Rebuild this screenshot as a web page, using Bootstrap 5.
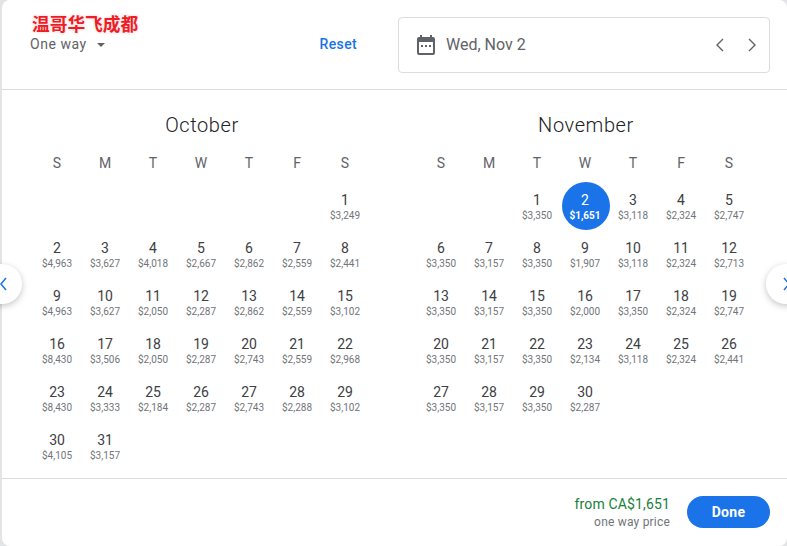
<!DOCTYPE html>
<html lang="en">
<head>
  <meta charset="UTF-8">
  <meta name="viewport" content="width=device-width, initial-scale=1.0">
  <title>Departure date</title>
  <link href="https://cdn.jsdelivr.net/npm/bootstrap@5.3.0/dist/css/bootstrap.min.css" rel="stylesheet">
  <style>
    body {
      background: #e3e4e6;
      font-family: Roboto, "Liberation Sans", sans-serif;
      color: #3c4043;
      overflow: hidden;
    }
    .sheet {
      position: relative;
      width: 785px;
      height: 546px;
      margin-left: 2px;
      background: #fff;
      border-radius: 8px;
    }
    .sheet-top {
      height: 90px;
      border-bottom: 1px solid #dadce0;
      padding: 17px 17px 0 28px;
    }
    .route-title {
      position: absolute;
      left: 30px;
      top: 11px;
      font: 700 17.7px/24px "Noto Sans CJK SC", sans-serif;
      color: #ee1c25;
      text-shadow: 0 0 2px #fff, 0 0 3px #f3b7ba;
    }
    .trip-type {
      margin-top: 17px;
      font-size: 14px;
      line-height: 20px;
      color: #5f6368;
      letter-spacing: .55px;
    }
    .trip-type i {
      display: inline-block;
      margin-left: 10px;
      vertical-align: 2px;
      border: 4px solid transparent;
      border-top-color: #5f6368;
      border-bottom-width: 0;
    }
    .reset-link {
      margin: 17px 41px 0 0;
      font-size: 14px;
      line-height: 20px;
      font-weight: 500;
      letter-spacing: .35px;
      color: #1a73e8;
      text-decoration: none;
    }
    .date-box {
      width: 372px;
      height: 56px;
      border: 1px solid #dadce0;
      border-radius: 4px;
      padding: 0 8px 0 18px;
      color: #5f6368;
    }
    .date-text {
      margin-left: 11px;
      font-size: 16px;
      color: #5f6368;
    }
    .months {
      height: 388px;
      padding: 0 31px 0 32px;
      gap: 48px;
    }
    .month-box { width: 336px; }
    .month-name {
      margin: 0;
      padding-top: 23px;
      height: 54px;
      font-size: 20px;
      line-height: 24px;
      font-weight: 300;
      text-align: center;
      color: #202124;
      letter-spacing: .6px;
    }
    .day-grid {
      display: grid;
      grid-template-columns: repeat(7, 48px);
      grid-template-rows: 38px;
      grid-auto-rows: 48px;
    }
    .day-head {
      padding-right: 2px;
      font-size: 14px;
      line-height: 38px;
      text-align: center;
      color: #5f6368;
    }
    .day-cell {
      text-align: center;
      padding: 10px 2px 0 0;
      font-size: 14px;
      line-height: 17px;
      color: #3c4043;
    }
    .day-cell span {
      display: block;
      font-size: 10px;
      line-height: 12px;
      margin-top: 1px;
      color: #70757a;
    }
    .day-cell.picked {
      background: #1a73e8;
      border-radius: 50%;
      color: #fff;
    }
    .day-cell.picked span {
      color: #fff;
      font-weight: 700;
    }
    .sheet-foot {
      height: 68px;
      border-top: 1px solid #dadce0;
      padding: 0 17px 0 0;
    }
    .from-price {
      font-size: 14px;
      line-height: 18px;
      color: #188038;
      letter-spacing: .15px;
    }
    .price-note {
      font-size: 12px;
      line-height: 18px;
      color: #70757a;
      letter-spacing: .2px;
    }
    .done-btn {
      width: 83px;
      height: 32px;
      margin: -1px 0 0 17px;
      padding: 0;
      border: 0;
      border-radius: 16px;
      background: #1a73e8;
      color: #fff;
      font-size: 14px;
      font-weight: 700;
      letter-spacing: .3px;
    }
    .page-arrow {
      position: absolute;
      top: 264px;
      width: 40px;
      height: 40px;
      padding: 0;
      border: 0;
      border-radius: 50%;
      background: #fff;
      box-shadow: 0 2px 6px rgba(60, 64, 67, .3);
    }
    .arrow-prev { left: -20px; }
    .arrow-next { left: 764px; }
    .arrow-prev svg { margin-left: 18px; }
    .arrow-next svg { margin-left: 17px; }
  </style>
</head>
<body>
  <div class="sheet">
    <div class="sheet-top d-flex justify-content-between">
      <div class="route-title">温哥华飞成都</div>
      <div class="trip-type">One way<i></i></div>
      <div class="d-flex">
        <a class="reset-link" href="#">Reset</a>
        <div class="date-box d-flex align-items-center">
          <svg width="18" height="20" viewBox="0 0 18 20" fill="#5f6368">
            <path d="M3 0h2v2h8V0h2v2h1a2 2 0 0 1 2 2v14a2 2 0 0 1-2 2H2a2 2 0 0 1-2-2V4a2 2 0 0 1 2-2h1zM2 7v11h14V7z"/>
            <rect x="4" y="10" width="2" height="2"/><rect x="8" y="10" width="2" height="2"/><rect x="12" y="10" width="2" height="2"/>
          </svg>
          <span class="date-text flex-grow-1">Wed, Nov 2</span>
          <svg class="me-4" width="9" height="14" viewBox="0 0 9 14" fill="none" stroke="#5f6368" stroke-width="1.4"><path d="M8 1 2 7l6 6"/></svg>
          <svg class="me-1" width="9" height="14" viewBox="0 0 9 14" fill="none" stroke="#5f6368" stroke-width="1.4"><path d="m1 1 6 6-6 6"/></svg>
        </div>
      </div>
    </div>

    <div class="months d-flex">
      <div class="month-box" id="october"></div>
      <div class="month-box" id="november"></div>
    </div>

    <div class="sheet-foot d-flex align-items-center justify-content-end">
      <div class="text-end">
        <div class="from-price">from CA$1,651</div>
        <div class="price-note">one way price</div>
      </div>
      <button type="button" class="done-btn">Done</button>
    </div>

    <button type="button" class="page-arrow arrow-prev d-flex align-items-center">
      <svg width="7" height="14" viewBox="0 0 7 14" fill="none" stroke="#1a73e8" stroke-width="1.5"><path d="M6 1 1 7l5 6"/></svg>
    </button>
    <button type="button" class="page-arrow arrow-next d-flex align-items-center">
      <svg width="7" height="14" viewBox="0 0 7 14" fill="none" stroke="#1a73e8" stroke-width="1.5"><path d="m1 1 5 6-5 6"/></svg>
    </button>
  </div>

  <script>
    const october = ['3,249','4,963','3,627','4,018','2,667','2,862','2,559','2,441','4,963','3,627','2,050','2,287','2,862','2,559','3,102','8,430','3,506','2,050','2,287','2,743','2,559','2,968','8,430','3,333','2,184','2,287','2,743','2,288','3,102','4,105','3,157'];
    const november = ['3,350','1,651','3,118','2,324','2,747','3,350','3,157','3,350','1,907','3,118','2,324','2,713','3,350','3,157','3,350','2,000','3,350','2,324','2,747','3,350','3,157','3,350','2,134','3,118','2,324','2,441','3,350','3,157','3,350','2,287'];

    function renderMonth(id, name, offset, prices, picked) {
      let html = `<h2 class="month-name">${name}</h2><div class="day-grid">`;
      'SMTWTFS'.split('').forEach(d => { html += `<div class="day-head">${d}</div>`; });
      for (let i = 0; i < offset; i++) html += '<div></div>';
      prices.forEach((p, i) => {
        const cls = i + 1 === picked ? ' picked' : '';
        html += `<div class="day-cell${cls}">${i + 1}<span>$${p}</span></div>`;
      });
      document.getElementById(id).innerHTML = html + '</div>';
    }

    renderMonth('october', 'October', 6, october, 0);
    renderMonth('november', 'November', 2, november, 2);
  </script>
  <script src="https://cdn.jsdelivr.net/npm/bootstrap@5.3.0/dist/js/bootstrap.bundle.min.js"></script>
</body>
</html>
